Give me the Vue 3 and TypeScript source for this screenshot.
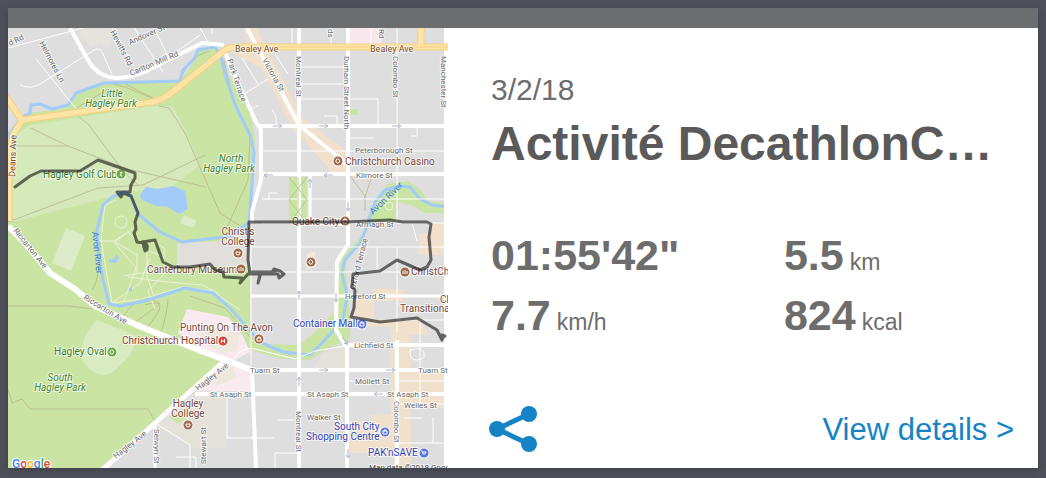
<script setup lang="ts">
interface MapLabel {
  text: string
  x: number
  y: number
  kind?: string
  angle?: number
}

interface Marker {
  x: number
  y: number
  color: string
  glyph: string
}

interface Stat {
  name: string
  value: string
  unit?: string
}

const labels: MapLabel[] = [
  { text: 'd Rd', x: 10, y: 46, angle: -26 },
  { text: 'Helmores Ln', x: 39, y: 43, angle: 62 },
  { text: 'Hewitts Rd', x: 110, y: 32, angle: 62 },
  { text: 'Andover St', x: 130, y: 45, angle: -24 },
  { text: 'Carlton Mill Rd', x: 131, y: 76, angle: -23 },
  { text: 'Park Terrace', x: 227, y: 60, angle: 71 },
  { text: 'Victoria St', x: 262, y: 60, angle: 61 },
  { text: 'Montreal St', x: 296, y: 56, angle: 90 },
  { text: 'Durham Street North', x: 344, y: 56, angle: 90 },
  { text: 'Colombo St', x: 393, y: 56, angle: 90 },
  { text: 'Manchester St', x: 441, y: 56, angle: 90 },
  { text: 'ds', x: 328, y: 29, angle: 90 },
  { text: 'Rd', x: 379, y: 29, angle: 90 },
  { text: 'Bealey Ave', x: 235, y: 52, kind: 'major' },
  { text: 'Bealey Ave', x: 370, y: 52, kind: 'major' },
  { text: 'Deans Ave', x: 15, y: 177, kind: 'major', angle: -88 },
  { text: 'Peterborough St', x: 355, y: 153 },
  { text: 'Kilmore St', x: 356, y: 178 },
  { text: 'Armagh St', x: 356, y: 227 },
  { text: 'Oxford Terrace', x: 355, y: 290, angle: -76 },
  { text: 'Hereford St', x: 345, y: 299 },
  { text: 'Lichfield St', x: 354, y: 348 },
  { text: 'Tuam St', x: 250, y: 373 },
  { text: 'Tuam St', x: 418, y: 373 },
  { text: 'Mollett St', x: 355, y: 384 },
  { text: 'St Asaph St', x: 210, y: 397 },
  { text: 'St Asaph St', x: 307, y: 397 },
  { text: 'St Asaph St', x: 387, y: 397 },
  { text: 'Welles St', x: 404, y: 408 },
  { text: 'Walker St', x: 307, y: 420 },
  { text: 'Montreal St', x: 296, y: 411, angle: 90 },
  { text: 'Colombo St', x: 394, y: 401, angle: 90 },
  { text: 'Selwyn St', x: 154, y: 429, angle: 90 },
  { text: 'Stewart St', x: 206, y: 464, angle: -90 },
  { text: 'Riccarton Ave', x: 13, y: 231, angle: 51 },
  { text: 'Riccarton Ave', x: 83, y: 299, angle: 31 },
  { text: 'Hagley Ave', x: 198, y: 391, angle: -38 },
  { text: 'Hagley Ave', x: 116, y: 459, angle: -38 },
  { text: 'Little', x: 112, y: 97, kind: 'park' },
  { text: 'Hagley Park', x: 111, y: 107, kind: 'park' },
  { text: 'North', x: 231, y: 162, kind: 'park' },
  { text: 'Hagley Park', x: 229, y: 172, kind: 'park' },
  { text: 'South', x: 60, y: 381, kind: 'park' },
  { text: 'Hagley Park', x: 60, y: 391, kind: 'park' },
  { text: 'Hagley Golf Club', x: 43, y: 178, kind: 'leisure' },
  { text: 'Hagley Oval', x: 54, y: 355, kind: 'leisure' },
  { text: 'Avon River', x: 92, y: 232, kind: 'water', angle: 84 },
  { text: 'Avon River', x: 373, y: 215, kind: 'water', angle: -44 },
  { text: 'Christchurch Casino', x: 345, y: 165, kind: 'place' },
  { text: 'Quake City', x: 292, y: 225, kind: 'place' },
  { text: "Christ's", x: 238, y: 235, kind: 'place middle' },
  { text: 'College', x: 238, y: 245, kind: 'place middle' },
  { text: 'Canterbury Museum', x: 147, y: 273, kind: 'place' },
  { text: 'ChristCh', x: 411, y: 275, kind: 'place' },
  { text: 'Ch', x: 440, y: 303, kind: 'place' },
  { text: 'Transitional', x: 400, y: 312, kind: 'place' },
  { text: 'Punting On The Avon', x: 180, y: 331, kind: 'place' },
  { text: 'Christchurch Hospital', x: 122, y: 344, kind: 'health' },
  { text: 'Hagley', x: 188, y: 407, kind: 'place middle' },
  { text: 'College', x: 188, y: 417, kind: 'place middle' },
  { text: 'Container Mall', x: 293, y: 327, kind: 'shop' },
  { text: 'South City', x: 334, y: 430, kind: 'shop' },
  { text: 'Shopping Centre', x: 306, y: 440, kind: 'shop' },
  { text: "PAK'nSAVE", x: 368, y: 456, kind: 'shop' },
]

const ring = 'M-2 -1a2 2 0 1 1 0 2z'
const box = 'M-2 -1h4v3h-4zM-1 -1v-1h2v1'
const cup = 'M-2 -1h4v1q0 2 -2 2t-2 -2z'
const temple = 'M-2 2v-3M0 2v-4M2 2v-3'

const markers: Marker[] = [
  { x: 121, y: 174, color: '#6cae45', glyph: 'M-1 2l2 -4M1 -2l-2 1M1 2h-1' },
  { x: 112, y: 352, color: '#6cae45', glyph: ring },
  { x: 338, y: 161, color: '#a0694a', glyph: ring },
  { x: 345, y: 221, color: '#a0694a', glyph: box },
  { x: 238, y: 253, color: '#a0694a', glyph: cup },
  { x: 311, y: 262, color: '#a0694a', glyph: ring },
  { x: 241, y: 269, color: '#a0694a', glyph: temple },
  { x: 405, y: 272, color: '#a0694a', glyph: temple },
  { x: 259, y: 339, color: '#a0694a', glyph: box },
  { x: 188, y: 425, color: '#a0694a', glyph: cup },
  { x: 223, y: 341, color: '#db4437', glyph: 'M-1.5 -2v4M1.5 -2v4M-1 0h2' },
  { x: 362, y: 324, color: '#5a76dd', glyph: box },
  { x: 385, y: 432, color: '#5a76dd', glyph: box },
  { x: 424, y: 453, color: '#5a76dd', glyph: 'M-3 -2h1l1 3h2l1 -2h-3' },
]

const arrows: string[] = [
  'translate(278 126)',
  'translate(324 126)',
  'translate(397 126)',
  'translate(268 175) rotate(180)',
  'translate(328 175) rotate(180)',
  'translate(310 183) rotate(-90)',
  'translate(348 207) rotate(90)',
  'translate(299 295) rotate(-90)',
  'translate(336 298) rotate(90)',
  'translate(299 381) rotate(-90)',
  'translate(324 370)',
  'translate(391 370)',
  'translate(378 394) rotate(180)',
  'translate(348 454) rotate(90)',
  'translate(345 341) rotate(56)',
]

const stats: Stat[] = [
  { name: 'Duration', value: '01:55\'42"' },
  { name: 'Distance', value: '5.5', unit: 'km' },
  { name: 'Average speed', value: '7.7', unit: 'km/h' },
  { name: 'Energy', value: '824', unit: 'kcal' },
]

function placement(label: MapLabel): string | undefined {
  return label.angle ? `rotate(${label.angle} ${label.x} ${label.y})` : undefined
}
</script>

<template>
  <main class="page">
    <article class="card">
      <div class="strip"></div>
      <div class="body">
        <svg class="map" viewBox="8 28 440 440" role="img" aria-label="Route map">
          <rect x="8" y="28" width="440" height="440" fill="#dedede" />

          <!-- City blocks -->
          <path d="M83 28h28v10l-4 10 -8 -5 -7 4 -14 -11z" fill="#e5e3db" />
          <path d="M347 28h35v16h-35z" fill="#f8e8ee" />
          <path d="M243 28h13l48 92 44 32v22h-14l-40 -44 -33 -62 -27 -14v-6h14z" fill="#f1e0cb" />
          <path d="M419 233h13v-10h16v32h-29z" fill="#f1e0cb" />
          <path d="M350 318l48 3 21 -4 10 18h-18v33h37v40h-37v60h-18v-15h-44v-32h22v-6h20v-88h-42z" fill="#f1e0cb" />
          <path d="M373 289h30v12h-30zM354 300h20v18h-20z" fill="#f1e0cb" />
          <path d="M155 425L195 394h32v54h-36l-1 -3z" fill="#e5e2da" />
          <path d="M323 354l24 -10v24h-34z" fill="#e5e2da" />
          <path d="M307 254l8 -3 2 16 -11 3z" fill="#f0e8dd" />

          <!-- Parks -->
          <path d="M8 146L30 113 65 108 76 92 105 82 180 81 190 68 197 50 215 46 222 55 228 75 250 110 255 140 254 165 249 243 250 331 180 331 222 362 100 468H8z" fill="#cae4a4" />
          <path d="M8 140l22 -15 125 -19h17l14 25 14 34 -28 22 -42 5 -113 29H8z" fill="#d5e9bb" />
          <path d="M97 320q-20 20 -14 42 20 24 36 4 18 -14 16 -31z" fill="#d9ebc1" />
          <path d="M66 228l19 8 -14 35 -19 -8zM184 215l13 6 -4 7 -13 -5z" fill="#dcebc8" />
          <path d="M177 243L230 241 240 232 249 229V266H177z" fill="#e1dfdb" />
          <path d="M250 276V331L266 344 300 345 320 327 338 308 336 285 342 258 362 235 371 205 388 184 408 181 421 190 428 201 448 203V213H424L414 206 396 202V221H370L357 244 345 262 349 300 350 340 340 343 325 350 310 360 282 359 248 349 234 325z" fill="#cae4a4" />
          <path d="M289 177h18v46h-18zM350 109h7v6h-7z" fill="#cae4a4" />
          <path d="M187 309L228 317 243 336 250 352 235 360 251 370V391H195L222 362 178 333z" fill="#f9eaf0" />
          <path d="M194 330l15 -5 11 5 20 3 -3 18 -14 2 -16 -8zM213 372l20 -6 3 12 -20 8z" fill="#efe8dc" />
          <path d="M169 417l15 -7 3 8 -9 6z" fill="#cae4a4" />

          <!-- Paths -->
          <g fill="none" stroke="#b8b58c" stroke-width="1" stroke-opacity="0.8">
            <path d="M79 117l10 8 34 46 15 14M8 146h60L31 128M68 146l60 23 78 18M159 106l10 2 16 25 35 80 28 18M8 222l90 -34 45 -3 62 -30M113 84l12 3 32 13M157 100l-32 -16M70 112l40 -24M180 78l13 -20 16 -7" />
            <path d="M8 306h60l25 3M8 389l4 14 10 -4 8 10h118l8 14M105 468l115 -103M92 290q8 -10 8 -48M120 322q20 -35 40 -18l-30 22M145 330q30 -35 0 -25M168 300q-2 20 -8 35" />
            <path d="M224 60l9 40 17 35 -2 45 -22 50M350 176l15 20v15M364 200l8 -24M190 296l35 12 26 30 40 17" />
          </g>
          <g fill="none" stroke="#ecf3d9" stroke-width="1">
            <path d="M116 200L105 205 101 240 107 275 112 303 142 299 182 287 212 291 240 310M100 241h14l14 -9 18 18 16 6 5 15 -19 20 7 18M114 242l22 26 -12 33M137 253v20M115 242l22 13M128 277l30 4 44 4 16 8M147 252v24l6 18M112 303l28 -20 10 -25M124 276l60 -10M150 240l14 8v12M133 228l-18 14" />
            <circle cx="121" cy="222" r="6" />
            <circle cx="376" cy="206" r="4" /><circle cx="389" cy="206" r="4" />
          </g>

          <!-- Water -->
          <g fill="none" stroke="#a2cbfa" stroke-linejoin="round">
            <path d="M4 140L24 116 30 113 31 105 40 104 52 109 68 105 76 93 104 83 180 81 183 70 194 59 198 50 215 47 221 56 226 78 236 107 250 135 254 152 252 185 249 222 232 236 182 242 160 232 138 214 131 196 125 192 112 197 103 205 97 230 98 250 103 280 109 304 120 306 145 301 185 288 213 293 230 308 247 327 260 342 283 352 310 355 323 342 343 320 347 295 342 273 345 260 360 243 367 227 375 202 385 190 400 186 410 187 420 199 432 205 448 207" stroke-width="3" />
          </g>
          <path d="M140 195l6 -8 12 2 15 -3 12 5 3 18 -9 5 -11 -7 -12 -1 -14 -6zM109 260l5 -1 2 -4 3 2 -3 6 -7 -1zM129 288l3 -1v4l-3 1z" fill="#a2cbfa" />

          <!-- Minor streets -->
          <g fill="none" stroke="#fff" stroke-width="1">
            <path d="M36 59l42 52M20 85q10 5 20 -1l56 -35q4 -1 6 3l10 22M8 48l75 -20M112 28l22 38M134 28l29 44M157 34l12 24M200 28l8 14M212 28v6M165 60l35 -25" />
            <path d="M292 28v18M331 28v16M371 28v16M397 28v195M299 67h48M299 84h46M299 99h79v26M242 58l16 26M244 94l24 -15M275 54l13 20M249 110l10 -5M272 109l4 8v8M324 116h13v8M350 138h23M411 136h6v-9" />
            <path d="M262 151h186M262 199h186M262 223h186M251 247h197M251 272h197M251 223v142M269 200v-7h8M397 247v85M377 247v25M397 320h51M412 223l5 18" />
            <path d="M227 394v45M190 468v-23l-35 -22M227 438h30M196 468v-11h-20M251 438h23M277 420h22M275 468v-15h22M397 381h51M397 404h51M420 320v83M397 443h51M348 381h22M433 418v25M404 418h18" />
            <path d="M410 350q16 -5 14 8 -15 7 -14 -8z" />
            <path d="M230 365q10 -20 25 -16l40 10 20 -8 30 -5" />
          </g>

          <!-- Streets -->
          <g fill="none" stroke="#fff" stroke-linejoin="round" stroke-width="4">
            <path d="M70 28l18 32q10 18 30 18 20 -1 42 -14L202 43 224 45M224 50L236 78 256 122 261 130V180L252 212V223M299 28v440M348 28V244L337 262 336 330 347 348V468M446 28v440M247 28l52 97 49 40" />
            <path d="M258 126h190M262 174h186M348 345h100M252 370h196M195 394h253M397 340v128M252 370l4 98" />
            <path d="M251 296h197M310 175v46M299 224h48M155 423v45" stroke-width="3" />
            <path d="M8 226l18 18 24 29 25 16 20 17 44 20 62 25 51 19" stroke-width="6" />
            <path d="M100 472l55 -49 67 -60" stroke-width="5" />
          </g>

          <!-- Avenues -->
          <g fill="none" stroke-linejoin="round">
            <path d="M4 94l18 26 130 -18q10 -2 18 -8l50 -40q7 -7 16 -7h212M22 120l-9 15 -4 20v66M421 28v18" stroke="#f4ce83" stroke-width="7" />
            <path d="M4 94l18 26 130 -18q10 -2 18 -8l50 -40q7 -7 16 -7h212M22 120l-9 15 -4 20v66M421 28v18" stroke="#ffe5a5" stroke-width="5" />
            <path d="M240 47h208" stroke="#f4ce83" stroke-width="1" />
          </g>

          <path d="M289 177l18 23 -18 23M307 177l-18 23 18 23M298 177v46" fill="none" stroke="#b8c894" />
          <path v-for="arrow in arrows" :key="arrow" :transform="arrow" d="M-5 0h8M1 -2l3 2 -3 2" fill="none" stroke="#aeb6cf" />

          <!-- Place names -->
          <text
            v-for="(label, index) in labels"
            :key="index"
            :x="label.x"
            :y="label.y"
            :transform="placement(label)"
            :class="['label', label.kind]"
          >{{ label.text }}</text>

          <g v-for="(marker, index) in markers" :key="`m${index}`" :transform="`translate(${marker.x} ${marker.y})`">
            <circle r="5.5" fill="#fff" fill-opacity="0.8" />
            <circle r="4.5" :fill="marker.color" />
            <path :d="marker.glyph" fill="none" stroke="#fff" />
          </g>

          <!-- Recorded route -->
          <g fill="none" stroke="#000" stroke-width="3" stroke-linecap="round" stroke-linejoin="round" opacity="0.56">
            <path
              d="M15 187L30 176 41 171H80L98 160 135 173V178L131 185 130 192H117L121 197 123 193 131 196 138 213 135 222 136 229 134 233 137 242 143 243 145 251 147 247 142 242 155 240 163 262 173 267H190L210 264 215 270 223 272 224 277 242 278 240 283 248 274H260L258 283 261 273H272L274 269 280 271 284 274 279 278 278 274H250L248 260 249 222H347L390 220 403 222H427L431 224 429 237 431 260 427 267 420 270 397 260 380 271 353 274 352 287 355 290 354 308 351 317 363 319 380 322 417 318 437 330 442 340 443 335 445 336"
            />
            <path d="M143 242l4 3v5l-3 -3zM250 272h22l4 -1M119 193l2 1M441 335l3 2" />
          </g>

          <text x="12" y="468" class="logo">
            <tspan fill="#4285f4">G</tspan><tspan fill="#ea4335">o</tspan><tspan fill="#fbbc05">o</tspan><tspan fill="#4285f4">g</tspan><tspan fill="#34a853">l</tspan><tspan fill="#ea4335">e</tspan>
          </text>
          <text x="369" y="470" class="label credit">Map data ©2018 Google</text>
        </svg>

        <section class="details">
          <header>
            <time class="date" datetime="2018-03-02">3/2/18</time>
            <h1 class="title">Activité DecathlonC…</h1>
          </header>
          <ul class="stats">
            <li v-for="stat in stats" :key="stat.name" class="stat">
              <strong class="value">{{ stat.value }}</strong>
              <span v-if="stat.unit" class="unit">{{ stat.unit }}</span>
            </li>
          </ul>
          <footer class="actions">
            <button class="share" type="button" aria-label="Share">
              <svg width="48" height="48" viewBox="0 0 48 48" aria-hidden="true">
                <path d="M40 9L8 24l32 15" fill="none" stroke="#1484c6" stroke-width="5" />
                <circle cx="8" cy="24" r="8" fill="#1484c6" />
                <circle cx="40" cy="9" r="8" fill="#1484c6" />
                <circle cx="40" cy="39" r="8" fill="#1484c6" />
              </svg>
            </button>
            <a class="link" href="#details">View details &gt;</a>
          </footer>
        </section>
      </div>
    </article>
  </main>
</template>

<style>
body {
  margin: 0;
  background: #4e505a;
}
</style>

<style scoped>
.page {
  padding: 8px 8px 10px;
  font-family: "Liberation Sans", Arial, sans-serif;
  color: #6d6d6d;
}

.card {
  background: #fff;
  box-shadow: 0 2px 8px rgba(0, 0, 0, 0.2);
}

.strip {
  height: 20px;
  background: #6c6d6e;
}

.body {
  display: grid;
  grid-template-columns: 44fr 59fr;
}

.map {
  display: block;
  width: 100%;
  aspect-ratio: 1;
  overflow: hidden;
}

.label {
  font: 8px Roboto, sans-serif;
  fill: #6b6b6b;
  stroke: #fff;
  stroke-opacity: 0.7;
  stroke-width: 2px;
  stroke-linejoin: round;
  paint-order: stroke;
}

.major {
  font-size: 9px;
  fill: #7c4a25;
}

.park {
  font-size: 10px;
  font-style: italic;
  fill: #42852b;
  text-anchor: middle;
}

.leisure {
  font-size: 10px;
  fill: #38801f;
}

.water {
  font-size: 9px;
  fill: #3f7fd0;
  stroke-opacity: 0;
}

.place {
  font-size: 10px;
  fill: #7a4b3b;
}

.middle {
  text-anchor: middle;
}

.health {
  font-size: 10px;
  fill: #8b3b35;
}

.shop {
  font-size: 10px;
  fill: #3345b8;
}

.credit {
  fill: #444;
}

.logo {
  font: 500 12px Roboto, sans-serif;
  stroke: #fff;
  stroke-width: 2px;
  paint-order: stroke;
}

.details {
  display: flex;
  flex-direction: column;
  justify-content: space-between;
  min-width: 0;
  padding: 44px 24px 15px 43px;
}

.date {
  display: block;
  font-size: 30px;
  line-height: 36px;
}

.title {
  margin: 8px 0 0;
  overflow: hidden;
  font-size: 48px;
  line-height: 56px;
  color: #5a5a5a;
  white-space: nowrap;
}

.stats {
  display: grid;
  grid-template-columns: 56% 44%;
  grid-auto-rows: 60px;
  margin: 0 0 8px;
  padding: 0;
  list-style: none;
}

.stat {
  display: flex;
  align-items: baseline;
  gap: 6px;
}

.value {
  font-size: 43px;
  line-height: 60px;
}

.unit {
  font-size: 23px;
  line-height: 30px;
}

.actions {
  display: flex;
  align-items: center;
  justify-content: space-between;
}

.share {
  display: block;
  margin: 0 0 0 -2px;
  padding: 0;
  border: 0;
  background: none;
  cursor: pointer;
}

.share svg {
  display: block;
}

.link {
  padding-top: 2px;
  font-size: 31px;
  color: #1484c6;
  text-decoration: none;
}
</style>
